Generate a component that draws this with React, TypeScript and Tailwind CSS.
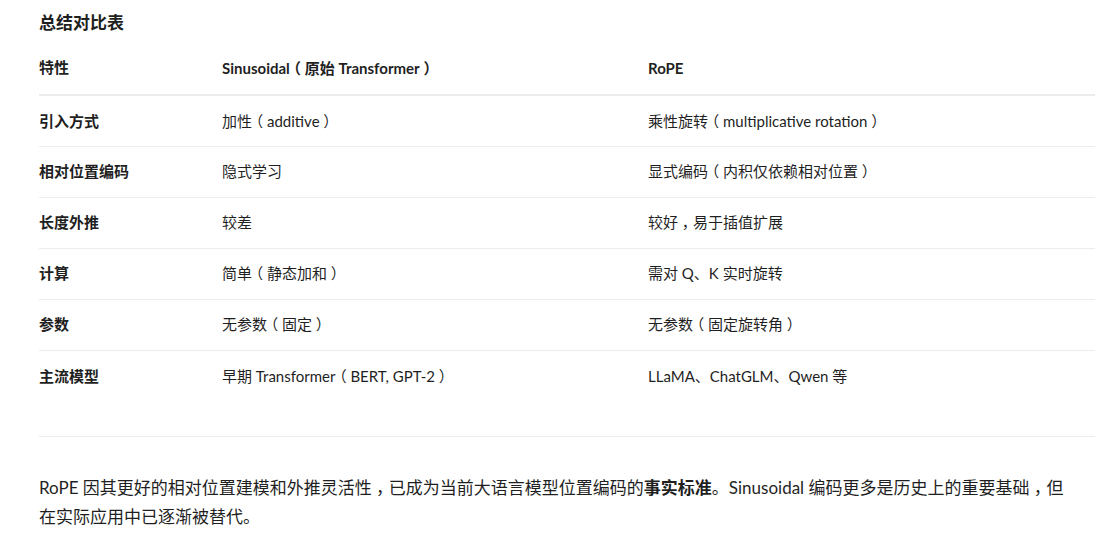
const rows: [string, string, string][] = [
  ['引入方式', '加性（additive）', '乘性旋转（multiplicative rotation）'],
  ['相对位置编码', '隐式学习', '显式编码（内积仅依赖相对位置）'],
  ['长度外推', '较差', '较好，易于插值扩展'],
  ['计算', '简单（静态加和）', '需对 Q、K 实时旋转'],
  ['参数', '无参数（固定）', '无参数（固定旋转角）'],
  ['主流模型', '早期 Transformer（BERT, GPT-2）', 'LLaMA、ChatGLM、Qwen 等'],
]

// the reference draws full-width punctuation centred in its em box:
// take the half-width glyph (halt) and centre it in a 1em cell
function Punct({ text }: { text: string }) {
  return (
    <>
      {text.split(/([，（）])/).map((part, i) =>
        /^[，（）]$/.test(part) ? (
          <span key={i} className="inline-block w-[1em] text-center [font-feature-settings:'halt']">
            {part}
          </span>
        ) : (
          part
        )
      )}
    </>
  )
}

export default function App() {
  return (
    <div
      className="w-[1110px] h-[541px] overflow-hidden bg-white text-[#1f1f1f] pl-[39px] pr-[15px]"
      style={{ fontFamily: 'Lato, "Noto Sans CJK SC", sans-serif' }}
    >
      <h3 className="pt-[11px] text-[17px] leading-[24px] font-bold">总结对比表</h3>

      <table className="w-full mt-[8px] border-collapse text-[15px] text-left">
        <thead>
          <tr className="border-b-2 border-[#ececec]">
            <th className="w-[183px] h-[52px] pb-[2px] font-bold align-middle">特性</th>
            <th className="w-[426px] font-bold align-middle">
              <Punct text="Sinusoidal（原始 Transformer）" />
            </th>
            <th className="font-bold align-middle">RoPE</th>
          </tr>
        </thead>
        <tbody>
          {rows.map((r, i) => (
            <tr key={r[0]} className={i < rows.length - 1 ? 'border-b border-[#ececec]' : ''}>
              <td className="h-[51px] font-bold align-middle">{r[0]}</td>
              <td className="align-middle">
                <Punct text={r[1]} />
              </td>
              <td className="align-middle">
                <Punct text={r[2]} />
              </td>
            </tr>
          ))}
        </tbody>
      </table>

      <hr className="mt-[35px] border-t border-[#ececec]" />

      <p className="mt-[36px] mr-[20px] text-[17px] leading-[29px]">
        <Punct text="RoPE 因其更好的相对位置建模和外推灵活性，已成为当前大语言模型位置编码的" />
        <strong className="font-bold">事实标准</strong>
        。Sinusoidal 编码更多是历史上的重要基础<Punct text="，" />但在实际应用中已逐渐被替代。
      </p>
    </div>
  )
}
